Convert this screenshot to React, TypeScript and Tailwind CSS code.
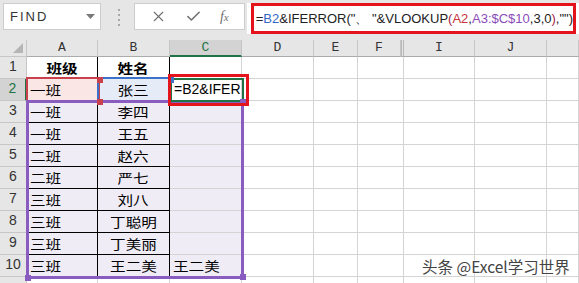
import React from "react";
import { X, Check } from "lucide-react";

const colHeads = ["A", "B", "C", "D", "E", "F", "", "I", "J", ""];

const data: string[][] = [
  ["班级", "姓名"],
  ["一班", "张三"],
  ["一班", "李四"],
  ["一班", "王五"],
  ["二班", "赵六"],
  ["二班", "严七"],
  ["三班", "刘八"],
  ["三班", "丁聪明"],
  ["三班", "丁美丽"],
  ["三班", "王二美"],
];

const cjk = "font-['Noto_Sans_CJK_SC',sans-serif]";

function Stretch({ children, origin }: { children: React.ReactNode; origin: string }) {
  return <span className={`inline-block scale-x-[1.2] ${origin}`}>{children}</span>;
}

function Cell({ r, c }: { r: number; c: number }) {
  const inAB = c <= 1 && r <= 10;
  let cls = "border-b overflow-hidden flex items-center whitespace-nowrap text-[13px] text-black ";
  if (c !== 5) cls += "border-r ";
  cls += inAB ? "border-black " : "border-[#d4d4d4] ";
  if (r === 2 && c === 0) cls += "bg-[#fbe6e6] ";
  else if (r === 2 && c === 1) cls += "bg-[#e5ecf7] ";
  else if (r >= 3 && r <= 10 && c <= 2) cls += "bg-[#efecf6] ";
  else cls += "bg-white ";

  let content: React.ReactNode = null;
  if (r <= 10 && c === 0) {
    const t = data[r - 1][0];
    content =
      r === 1 ? (
        <span className="w-full text-center font-bold">
          <Stretch origin="origin-center">{t}</Stretch>
        </span>
      ) : (
        <span className="pl-[3px]">
          <Stretch origin="origin-left">{t}</Stretch>
        </span>
      );
  } else if (r <= 10 && c === 1) {
    content = (
      <span className={`w-full text-center ${r === 1 ? "font-bold" : ""}`}>
        <Stretch origin="origin-center">{data[r - 1][1]}</Stretch>
      </span>
    );
  } else if (r === 2 && c === 2) {
    content = (
      <span className="pl-[4px] font-['Liberation_Sans',sans-serif] text-[14px]">=B2&amp;IFER</span>
    );
  } else if (r === 10 && c === 2) {
    content = (
      <span className="pl-[3px]">
        <Stretch origin="origin-left">王二美</Stretch>
      </span>
    );
  }
  return <div className={cls}>{content}</div>;
}

export default function App() {
  const rows = Array.from({ length: 11 }, (_, i) => i + 1);
  return (
    <div className={`w-[579px] h-[283px] overflow-hidden bg-white relative ${cjk}`}>
      {/* toolbar */}
      <div className="h-[40px] bg-[#e6e6e6] flex items-start pt-[3px] font-['Liberation_Sans',sans-serif]">
        <div className="ml-[3px] w-[98px] h-[27px] bg-white border border-[#cdcdcd] flex items-center justify-between pl-[6px] pr-[5px]">
          <span className="text-[13px] tracking-[2px] text-[#333]">FIND</span>
          <svg width="9" height="5" viewBox="0 0 9 5">
            <polygon points="0,0 9,0 4.5,5" fill="#7a7a7a" />
          </svg>
        </div>
        <div className="ml-[17px] mt-[6px] flex flex-col gap-[3px]">
          <div className="w-[2px] h-[2px] bg-[#a8a8a8]" />
          <div className="w-[2px] h-[2px] bg-[#a8a8a8]" />
          <div className="w-[2px] h-[2px] bg-[#a8a8a8]" />
          <div className="w-[2px] h-[2px] bg-[#a8a8a8]" />
        </div>
        <div className="ml-[14px] w-[111px] h-[27px] bg-white border border-[#cdcdcd] flex items-center justify-around px-[6px]">
          <X size={17} strokeWidth={1.6} color="#6f6f6f" />
          <Check size={17} strokeWidth={2.2} color="#6f6f6f" />
          <span className="font-['Liberation_Serif',serif] italic text-[#6f6f6f] text-[14px]">
            f<span className="text-[11px]">x</span>
          </span>
        </div>
        <div className="ml-[2px] flex-1 h-[31px] bg-white pl-[4px] pr-[3px]">
          <div className="h-[31px] border-[3px] border-[#e4141c] flex items-center pl-[2px] text-[13px] whitespace-nowrap overflow-hidden font-['Liberation_Sans',sans-serif] text-[#222]">
            <span>=</span>
            <span className="text-[#3467c5]">B2</span>
            <span>&amp;IFERROR("、 "&amp;VLOOKUP</span>
            <span className="text-[#a2264a]">(</span>
            <span className="text-[#c5343a]">A2</span>
            <span>,</span>
            <span className="text-[#8a4cb8]">A3:$C$10</span>
            <span>,3,0</span>
            <span className="text-[#a2264a]">)</span>
            <span>,"")</span>
          </div>
        </div>
      </div>

      {/* sheet */}
      <div className="relative">
        <div className="grid grid-cols-[27px_71px_72px_72px_72px_44px_43px_3px_71px_72px_1fr] grid-rows-[17px_repeat(11,22px)]">
          <div className="bg-[#e6e6e6] border-r border-b border-[#c6c6c6] relative">
            <svg className="absolute right-[3px] bottom-[3px]" width="10" height="10" viewBox="0 0 10 10">
              <polygon points="10,0 10,10 0,10" fill="#b5b5b5" />
            </svg>
          </div>
          {colHeads.map((h, i) => {
            const sel = i === 2;
            const hidden = i === 6;
            return (
              <div
                key={i}
                className={`flex items-center justify-center font-['Liberation_Mono',monospace] text-[13px] ${
                  sel
                    ? "bg-[#d3d3d3] text-[#217346] border-r border-r-[#c6c6c6] border-b-2 border-b-[#217346]"
                    : hidden
                    ? "bg-[#e6e6e6] border-x border-[#b8b8b8] border-b border-b-[#ababab]"
                    : "bg-[#e6e6e6] text-[#333] border-r border-r-[#c6c6c6] border-b border-b-[#ababab]"
                }`}
              >
                {h}
              </div>
            );
          })}
          {rows.map((r) => (
            <React.Fragment key={r}>
              <div
                className={`flex items-end justify-center pb-[1px] font-['Liberation_Sans',sans-serif] text-[14px] border-b border-[#c6c6c6] ${
                  r === 2
                    ? "bg-[#d3d3d3] text-[#217346] border-r-2 border-r-[#217346]"
                    : "bg-[#e6e6e6] text-[#333] border-r"
                }`}
              >
                {r <= 10 ? r : null}
              </div>
              {Array.from({ length: 10 }, (_, c) => (c === 6 ? (
                <div key={c} className="bg-white border-r border-b border-[#d4d4d4]" />
              ) : (
                <Cell key={c} r={r} c={c > 6 ? c - 1 : c} />
              )))}
            </React.Fragment>
          ))}
        </div>

        {/* reference range highlights */}
        <div className="absolute left-[26px] top-[37px] w-[74px] h-[25px] border-2 border-[#c8414c]" />
        <div className="absolute left-[97px] top-[37px] w-[75px] h-[25px] border-2 border-[#3c72c8]" />
        <div className="absolute left-[26px] top-[60px] w-[218px] h-[179px] border-[3px] border-[#8a5cc0]" />
        <div className="absolute left-[170px] top-[38px] w-[74px] h-[24px] border-2 border-[#217346]" />
        {[
          [97, 37, "bg-[#c8414c]"],
          [97, 59, "bg-[#c8414c]"],
          [168, 37, "bg-[#3c72c8]"],
          [240, 59, "bg-[#8a5cc0]"],
          [25, 235, "bg-[#8a5cc0]"],
          [240, 234, "bg-[#8a5cc0]"],
        ].map(([x, y, bg], i) => (
          <div
            key={i}
            className={`absolute w-[6px] h-[6px] ${bg}`}
            style={{ left: x as number, top: y as number }}
          />
        ))}
        <div className="absolute left-[168px] top-[34px] w-[81px] h-[32px] border-[3px] border-[#e4141c]" />

        <div className="absolute left-[422px] top-[215px] text-[15.5px] text-[#444] [text-shadow:0_0_2px_#fff,0_0_2px_#fff]">
          头条 @Excel学习世界
        </div>
      </div>
    </div>
  );
}
